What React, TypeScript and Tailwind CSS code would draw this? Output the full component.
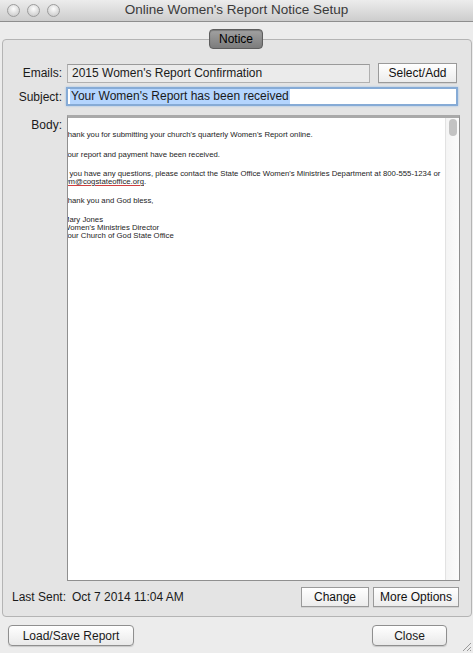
import React from 'react';

function Light() {
  return (
    <div className="w-[13px] h-[13px] rounded-full border border-[#9c9c9c] bg-[radial-gradient(circle_at_50%_35%,#fdfdfd,#d4d4d4_70%,#bdbdbd)]" />
  );
}

function MacButton({ label, className }: { label: string; className: string }) {
  return (
    <div
      className={`flex items-center justify-center border border-[#9a9a9a] bg-linear-to-b from-[#ffffff] to-[#ececec] text-[12px] text-[#111] shadow-[0_1px_0_rgba(0,0,0,0.08)] ${className}`}
    >
      {label}
    </div>
  );
}

export default function App() {
  return (
    <div className="relative w-[473px] h-[653px] overflow-hidden bg-[#ececec] font-['Liberation_Sans',Arial,sans-serif] text-[12px] text-[#1a1a1a]">
      {/* Title bar */}
      <div className="relative flex items-center h-[22px] border-b border-[#8e8e8e] bg-linear-to-b from-[#ececec] to-[#cdcdcd]">
        <div className="flex items-center gap-[7px] pl-[7px]">
          <Light />
          <Light />
          <Light />
        </div>
        <div className="absolute inset-0 flex items-center justify-center text-[13.5px] text-[#3a3a3a]">
          Online Women's Report Notice Setup
        </div>
      </div>

      {/* Group box */}
      <div className="relative mt-[17px] ml-[2px] mr-[1px] rounded-[4px] border border-[#b4b4b4] bg-[#e4e4e4] pb-[10px]">
        <div className="absolute left-[206px] top-[-11px] flex items-center justify-center w-[54px] h-[20px] rounded-[4px] border border-[#5e5e5e] bg-linear-to-b from-[#a2a2a2] to-[#7c7c7c] text-[12px] text-black shadow-[inset_0_1px_1px_rgba(0,0,0,0.25)]">
          Notice
        </div>

        {/* Emails */}
        <div className="flex items-center h-[20px] mt-[23px]">
          <div className="w-[59px] text-right">Emails:</div>
          <div className="ml-[5px] flex items-center w-[303px] h-[19px] border border-[#b0b0b0] border-t-[#9a9a9a] bg-[#ebebeb] pl-[4px] text-[12px]">
            2015 Women's Report Confirmation
          </div>
          <MacButton label="Select/Add" className="ml-[8px] w-[79px] h-[20px]" />
        </div>

        {/* Subject */}
        <div className="flex items-center h-[19px] mt-[4px]">
          <div className="w-[59px] text-right">Subject:</div>
          <div className="ml-[4px] flex items-center w-[392px] h-[19px] border-2 border-[#86abd6] bg-white pl-[2px] shadow-[0_0_2px_#9cc0ea]">
            <span className="bg-[#b4d5fe] px-[1px] leading-[15px]">Your Women's Report has been received</span>
          </div>
        </div>

        {/* Body */}
        <div className="flex items-start mt-[9px]">
          <div className="w-[59px] text-right pt-[1px]">Body:</div>
          <div className="ml-[5px] flex w-[393px] h-[466px] border border-[#8f8f8f] border-t-[3px] border-t-[#a9a9a9] bg-white">
            <div className="flex-1 overflow-hidden">
              <div className="ml-[-5px] pt-[13px] font-['Liberation_Sans',Arial,sans-serif] text-[7.75px] leading-[8px] text-[#1d1d1d] whitespace-nowrap">
                <p className="mb-[12px]">Thank you for submitting your church's quarterly Women's Report online.</p>
                <p className="mb-[11px]">Your report and payment have been received.</p>
                <p className="mb-[11px]">
                  If you have any questions, please contact the State Office Women's Ministries Department at 800-555-1234 or
                  <br />
                  <span className="underline decoration-[#d04040]">wm@cogstateoffice.org</span>.
                </p>
                <p className="mb-[11px]">Thank you and God bless,</p>
                <p>
                  Mary Jones
                  <br />
                  Women's Ministries Director
                  <br />
                  Your Church of God State Office
                </p>
              </div>
            </div>
            <div className="w-[14px] border-l border-[#e2e2e2] bg-linear-to-r from-[#f4f4f4] to-[#fbfbfb] pt-[1px]">
              <div className="mx-auto w-[8px] h-[17px] rounded-full bg-[#c3c3c3]" />
            </div>
          </div>
        </div>

        {/* Last sent */}
        <div className="flex items-center h-[19px] mt-[6px]">
          <div className="ml-[9px] w-[60px]">Last Sent:</div>
          <div>Oct 7 2014 11:04 AM</div>
          <div className="flex-1" />
          <MacButton label="Change" className="w-[68px] h-[20px]" />
          <MacButton label="More Options" className="ml-[4px] w-[86px] h-[20px] mr-[12px]" />
        </div>
      </div>

      {/* Bottom buttons */}
      <div className="flex items-center mt-[8px] px-[8px]">
        <div className="flex items-center justify-center w-[126px] h-[21px] rounded-[4px] border border-[#8f8f8f] bg-linear-to-b from-[#ffffff] to-[#e9e9e9] shadow-[0_1px_1px_rgba(0,0,0,0.15)]">
          Load/Save Report
        </div>
        <div className="flex-1" />
        <div className="mr-[18px] flex items-center justify-center w-[75px] h-[21px] rounded-[4px] border border-[#8f8f8f] bg-linear-to-b from-[#ffffff] to-[#e9e9e9] shadow-[0_1px_1px_rgba(0,0,0,0.15)]">
          Close
        </div>
      </div>

      {/* Resize grip */}
      <svg className="absolute right-[1px] bottom-[1px]" width="12" height="12" viewBox="0 0 12 12">
        <path d="M11 3 L3 11 M11 7 L7 11 M11 10 L10 11" stroke="#9a9a9a" strokeWidth="1" />
      </svg>
    </div>
  );
}
